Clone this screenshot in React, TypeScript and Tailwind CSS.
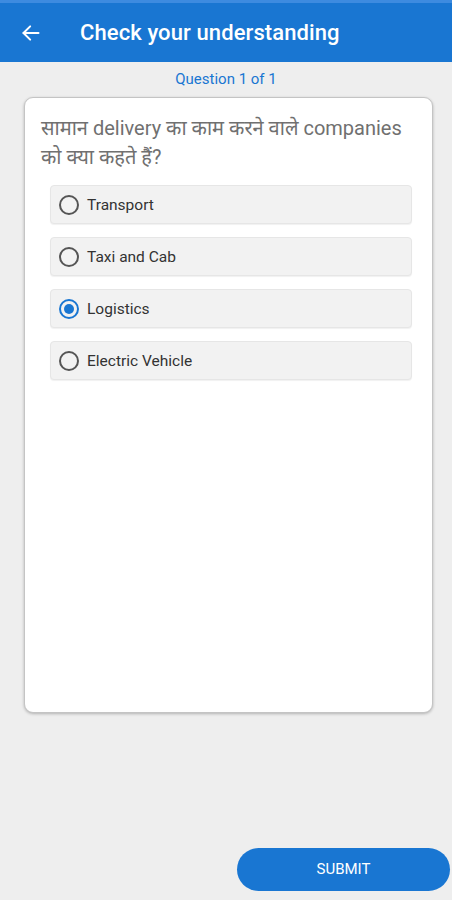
import { useState } from 'react';

const options = ['Transport', 'Taxi and Cab', 'Logistics', 'Electric Vehicle'];

function Radio({ checked }: { checked: boolean }) {
  return (
    <span
      className={`flex h-[20px] w-[20px] shrink-0 items-center justify-center rounded-full border-2 ${
        checked ? 'border-[#1976d2]' : 'border-[#555555]'
      }`}
    >
      {checked && <span className="h-[10px] w-[10px] rounded-full bg-[#1976d2]" />}
    </span>
  );
}

export default function App() {
  const [selected, setSelected] = useState('Logistics');

  return (
    <div
      className="flex h-[900px] w-[452px] flex-col bg-[#eeeeee]"
      style={{ fontFamily: 'Roboto, "Noto Sans", "Noto Sans Devanagari", sans-serif' }}
    >
      <header className="flex h-[62px] shrink-0 items-center border-t-[3px] border-[#3d8be0] bg-[#1976d2] text-white">
        <svg className="ml-[21px] h-[20px] w-[20px]" viewBox="0 0 24 24" fill="none" stroke="white" strokeWidth="2.4" strokeLinecap="round" strokeLinejoin="round">
          <path d="M21 12H3" />
          <path d="M11 4l-8 8 8 8" />
        </svg>
        <h1 className="ml-[39px] text-[22px] font-medium tracking-[0.1px]">Check your understanding</h1>
      </header>

      <div className="flex h-[35px] shrink-0 items-center justify-center text-[15px] text-[#1976d2]">
        Question 1 of 1
      </div>

      <div className="ml-[24px] mr-[19px] h-[616px] shrink-0 rounded-[9px] border border-[#c4c4c4] bg-white shadow-[0_1px_3px_rgba(0,0,0,0.25)]">
        <p className="pl-[16px] pr-[24px] pt-[16px] text-[20px] leading-[29px] text-[#707070]">
          सामान delivery का काम करने वाले companies को क्या कहते हैं?
        </p>
        <div className="mt-[13px] flex flex-col gap-[13px] pl-[25px] pr-[20px]">
          {options.map((o) => (
            <button
              key={o}
              onClick={() => setSelected(o)}
              className="flex h-[39px] items-center gap-[8px] rounded-[4px] border border-[#e6e6e6] bg-[#f2f2f2] pl-[8px] text-left text-[15.5px] text-[#333333] shadow-[0_1px_1px_rgba(0,0,0,0.06)]"
            >
              <Radio checked={selected === o} />
              <span className="pt-[3px]">{o}</span>
            </button>
          ))}
        </div>
      </div>

      <div className="mt-auto mb-[9px] flex justify-end pr-[2px]">
        <button className="h-[43px] w-[213px] rounded-full bg-[#1976d2] text-[15px] text-white">
          SUBMIT
        </button>
      </div>
    </div>
  );
}
